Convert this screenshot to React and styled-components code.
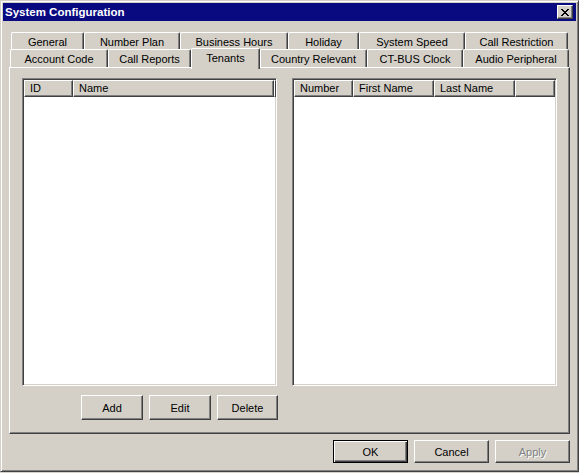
import React from "react";
import styled, { createGlobalStyle } from "styled-components";

const GlobalStyle = createGlobalStyle`
  html, body {
    margin: 0;
    padding: 0;
    background: #d4d0c8;
  }
  body {
    font-family: "Liberation Sans", Arial, sans-serif;
    font-size: 11px;
    color: #000;
  }
`;

const tabRows = [
  [
    { label: "General", width: 73 },
    { label: "Number Plan", width: 96 },
    { label: "Business Hours", width: 108 },
    { label: "Holiday", width: 71 },
    { label: "System Speed", width: 106 },
    { label: "Call Restriction", width: 103 },
  ],
  [
    { label: "Account Code", width: 98 },
    { label: "Call Reports", width: 83 },
    { label: "Tenants", width: 69, active: true },
    { label: "Country Relevant", width: 107 },
    { label: "CT-BUS Clock", width: 96 },
    { label: "Audio Peripheral", width: 106 },
  ],
];

const SystemConfiguration = () => {
  return (
    <Window>
      <TitleBar>
        <Title>System Configuration</Title>
        <CloseButton aria-label="Close">
          <svg width="8" height="7" viewBox="0 0 8 7" shapeRendering="crispEdges">
            <path
              d="M0 0h2v1h1v1h2V1h1V0h2v1H7v1H6v1H5v1h1v1h1v1h1v1H6V6H5V5H3v1H2v1H0V6h1V5h1V4h1V3H2V2H1V1H0z"
              fill="#000"
            />
          </svg>
        </CloseButton>
      </TitleBar>

      <Client>
        <TabControl>
          <TabStrip>
            {tabRows.map((row, i) => (
              <TabRow key={i} $offset={i === 0 ? 2 : 1}>
                {row.map(({ label, width, active }) => (
                  <Tab key={label} $width={width} $active={active}>
                    {label}
                  </Tab>
                ))}
              </TabRow>
            ))}
          </TabStrip>

          <Panel>
            <ListView>
              <ListHeader>
                <HeaderCell $width={49}>ID</HeaderCell>
                <HeaderCell $width={201}>Name</HeaderCell>
                <HeaderFiller />
              </ListHeader>
            </ListView>
            <ListView>
              <ListHeader>
                <HeaderCell $width={59}>Number</HeaderCell>
                <HeaderCell $width={81}>First Name</HeaderCell>
                <HeaderCell $width={81}>Last Name</HeaderCell>
                <HeaderFiller />
              </ListHeader>
            </ListView>
            <PanelButtons>
              <Button $width={62}>Add</Button>
              <Button $width={62}>Edit</Button>
              <Button $width={61}>Delete</Button>
            </PanelButtons>
          </Panel>
        </TabControl>

        <Footer>
          <Button $width={75} $height={23} $default>
            OK
          </Button>
          <Button $width={75} $height={23}>
            Cancel
          </Button>
          <Button $width={75} $height={23} disabled>
            Apply
          </Button>
        </Footer>
      </Client>
    </Window>
  );
};

const Window = styled.div`
  width: 579px;
  height: 472px;
  box-sizing: border-box;
  background: #d4d0c8;
  border: 1px solid;
  border-color: #d4d0c8 #404040 #404040 #d4d0c8;
  box-shadow: inset 1px 1px 0 #fff, inset -1px -1px 0 #808080;
  padding: 2px;
  display: flex;
  flex-direction: column;
`;

const TitleBar = styled.div`
  height: 18px;
  background: #0a0a80;
  display: flex;
  align-items: center;
  justify-content: space-between;
  padding: 0 3px 0 2px;
`;

const Title = styled.span`
  color: #fff;
  font-weight: bold;
  font-size: 11.5px;
  line-height: 18px;
  white-space: nowrap;
`;

const CloseButton = styled.button`
  width: 16px;
  height: 14px;
  padding: 0;
  box-sizing: border-box;
  background: #d4d0c8;
  border: 1px solid;
  border-color: #fff #404040 #404040 #fff;
  box-shadow: inset -1px -1px 0 #808080;
  display: flex;
  align-items: center;
  justify-content: center;
`;

const Client = styled.div`
  flex: 1;
  display: flex;
  flex-direction: column;
  padding: 11px 6px 0 6px;
`;

const TabControl = styled.div`
  width: 561px;
  display: flex;
  flex-direction: column;
`;

const TabStrip = styled.div`
  display: flex;
  flex-direction: column;
`;

const TabRow = styled.div`
  display: flex;
  height: ${({ $offset }) => ($offset === 2 ? 18 : 17)}px;
  margin-left: ${({ $offset }) => $offset}px;
  align-items: flex-end;
`;

const Tab = styled.div`
  position: relative;
  z-index: ${({ $active }) => ($active ? 2 : 1)};
  width: ${({ $width }) => $width}px;
  height: ${({ $active }) => ($active ? 21 : 18)}px;
  margin-bottom: ${({ $active }) => ($active ? -2 : 0)}px;
  flex-shrink: 0;
  box-sizing: border-box;
  background: #d4d0c8;
  border-top: 1px solid #fff;
  border-left: 1px solid #fff;
  border-right: 1px solid #404040;
  border-radius: 2px 2px 0 0;
  box-shadow: inset -1px 0 0 #808080;
  display: flex;
  align-items: ${({ $active }) => ($active ? "flex-start" : "center")};
  padding-top: ${({ $active }) => ($active ? 2 : 0)}px;
  justify-content: center;
  white-space: nowrap;
  line-height: 14px;
`;

const Panel = styled.div`
  height: 367px;
  box-sizing: border-box;
  border: 1px solid;
  border-color: #fff #404040 #404040 #fff;
  box-shadow: inset -1px -1px 0 #808080;
  padding: 10px 0 0 12px;
  display: grid;
  grid-template-columns: 255px 265px;
  grid-template-rows: 308px auto;
  column-gap: 15px;
  align-content: start;
`;

const ListView = styled.div`
  box-sizing: border-box;
  background: #fff;
  border: 1px solid;
  border-color: #808080 #fff #fff #808080;
  box-shadow: inset 1px 1px 0 #404040, inset -1px -1px 0 #d4d0c8;
  padding: 1px;
  overflow: hidden;
`;

const ListHeader = styled.div`
  display: flex;
  height: 17px;
`;

const HeaderCell = styled.div`
  width: ${({ $width }) => $width}px;
  flex-shrink: 0;
  box-sizing: border-box;
  background: #d4d0c8;
  border-top: 1px solid #fff;
  border-left: 1px solid #fff;
  border-right: 1px solid #404040;
  border-bottom: 1px solid #404040;
  box-shadow: inset -1px -1px 0 #808080;
  padding-left: 5px;
  line-height: 14px;
  white-space: nowrap;
  overflow: hidden;
`;

const HeaderFiller = styled(HeaderCell)`
  flex: 1;
  padding: 0;
`;

const PanelButtons = styled.div`
  grid-column: 1;
  display: flex;
  justify-content: flex-end;
  gap: 6px;
  margin-top: 9px;
  margin-right: -1px;
`;

const Button = styled.button`
  width: ${({ $width }) => $width}px;
  height: ${({ $height }) => $height || 25}px;
  box-sizing: border-box;
  padding: 0;
  font-family: "Liberation Sans", Arial, sans-serif;
  font-size: 11px;
  color: #000;
  background: #d4d0c8;
  border: 1px solid;
  border-color: #fff #404040 #404040 #fff;
  box-shadow: inset -1px -1px 0 #808080;
  ${({ $default }) =>
    $default &&
    `
    border: 1px solid #000;
    box-shadow: inset 1px 1px 0 #fff, inset -1px -1px 0 #404040, inset -2px -2px 0 #808080;
  `}
  &:disabled {
    color: #808080;
    text-shadow: 1px 1px 0 #fff;
  }
`;

const Footer = styled.div`
  display: flex;
  justify-content: flex-end;
  gap: 6px;
  margin-top: 6px;
  width: 561px;
`;

export default function App() {
  return (
    <>
      <GlobalStyle />
      <SystemConfiguration />
    </>
  );
}
